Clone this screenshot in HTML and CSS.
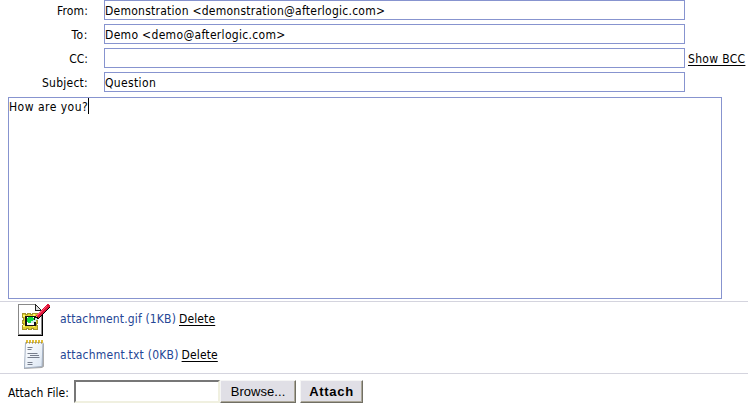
FILE: index.html
```html
<!DOCTYPE html>
<html lang="en">
<head>
<meta charset="utf-8">
<title>New message</title>
<link rel="stylesheet" href="styles.css">
</head>
<body>
<form class="compose">
  <div class="fields">
    <div class="label from">From:</div><div class="field"><span class="t-sender">Demonstration &lt;demonstration@afterlogic.com&gt;</span></div><div></div>
    <div class="label to">To:</div><div class="field"><span class="t-recipient">Demo &lt;demo@afterlogic.com&gt;</span></div><div></div>
    <div class="label">CC:</div><div class="field"></div><a class="link bcc">Show BCC</a>
    <div class="label subject">Subject:</div><div class="field"><span class="t-question">Question</span></div><div></div>
  </div>
  <div class="message"><span class="t-body">How are you?</span><i class="caret"></i></div>
  <div class="attachments">
    <div class="attachment gif">
      <svg class="icon" width="34" height="34" viewBox="0 0 34 34" shape-rendering="crispEdges">
        <path d="M1.500 1.500h17l6 6v24h-23z" fill="#fff" stroke="#888"/>
        <path d="M1 32h24V8" fill="none" stroke="#000"/>
        <path d="M18.500 1.500v6h6z" fill="#ddd" stroke="#222"/>
        <path d="M5 10h3v1h2v-1h3v1h2v-1h5v4h-1v3h1v3h-1v2h1v4h-4v-1h-2v1h-3v-1H9v1H5v-4h1v-2H5v-3h1v-3H5z" fill="#e0d02c" stroke="#a3952a"/>
        <path d="M6 12h2v2H6zM16 11h2v2h-2zM6 22h2v2H6zM16 22h2v2h-2z" fill="#fff76b"/>
        <path d="M8 13h11v10H8z" fill="#111"/>
        <path d="M10 14h7v8h-7z" fill="#fff"/>
        <path d="M11 14h5v1h1v4h-1v1h-5v-1h-1v-4h1z" fill="#12d943"/>
        <path d="M14 18h2v-1h2v-2h3v2h-2v2h-2v1h-3z" fill="#c8eee8"/>
        <path d="M20 15.500L32 3.500" stroke="#000" stroke-width="3"/>
        <path d="M20 14L32 2" stroke="#e0163a" stroke-width="3"/>
        <path d="M20 12.500L30 3" stroke="#ff5575"/>
      </svg>
      <span class="file t-gif">attachment.gif (1KB)</span><a class="link delete">Delete</a>
    </div>
    <div class="attachment">
      <svg class="icon" width="34" height="34" viewBox="0 0 34 34">
        <defs><linearGradient id="paper" x2="1" y2="1"><stop stop-color="#fff"/><stop offset="1" stop-color="#dbe6f3"/></linearGradient></defs>
        <path d="M9 5.500h18v23L25 30 7 31z" fill="#aaa"/>
        <path d="M8.500 4.500h17.500l-1 24-17.500 1.500z" fill="url(#paper)" stroke="#a6b3c5"/>
        <path d="M9 3.500h17" stroke="#e0bd36" stroke-width="3" stroke-dasharray="2 1"/>
        <path d="M9 5h17" stroke="#8c7430" stroke-dasharray="1 2"/>
        <path d="M10.500 9.500h5M10.500 11.500h4M10.500 15.500h10M13 17.500h9M10.500 19.500h12M10.500 24.500h5M10.500 26.500h5" stroke="#777e8c"/>
      </svg>
      <span class="file t-txt">attachment.txt (0KB)</span><a class="link delete">Delete</a>
    </div>
  </div>
  <div class="upload">
    <span class="upload-label">Attach File:</span>
    <span class="path"></span>
    <span class="button browse">Browse...</span>
    <span class="button attach">Attach</span>
  </div>
</form>
</body>
</html>
```
FILE: styles.css
```css
* { box-sizing: border-box; }
body {
  margin: 0;
  width: 748px;
  height: 408px;
  overflow: hidden;
  background: #fff;
  color: #000;
  font: 12px/18px "DejaVu Sans Condensed", "Noto Sans", sans-serif;
  white-space: nowrap;
}
.fields {
  display: grid;
  grid-template-columns: 88px 597px 63px;
  grid-auto-rows: 20px;
  row-gap: 4px;
}
.label { text-align: right; padding-top: 2px; }
.from { letter-spacing: .15px; }
.to { letter-spacing: .6px; }
.subject { letter-spacing: .25px; }
.field { margin-left: 16px; border: 1px solid #8794cf; padding-top: 1px; }
.field span { display: block; margin-bottom: -1px; }
.t-sender { letter-spacing: .25px; }
.t-recipient { letter-spacing: .32px; }
.t-question { letter-spacing: .35px; }
.t-body { letter-spacing: .48px; }
.bcc { justify-self: start; margin-left: 3px; padding-top: 2px; letter-spacing: .32px; }
.link { color: #000; text-decoration: underline; text-underline-offset: 2px; }
.message {
  display: flex;
  margin: 5px 0 0 8px;
  width: 714px;
  height: 202px;
  border: 1px solid #8794cf;
}
.caret { width: 1px; height: 16px; background: #000; }
.attachments {
  display: grid;
  grid-template-rows: 35px 36px;
  margin-top: 2px;
  height: 73px;
  border-top: 1px solid #d4d4de;
  border-bottom: 1px solid #d4d4de;
}
.attachment { display: flex; align-items: center; padding-left: 17px; }
.gif .file, .gif .delete { margin-top: -1px; }
.icon { flex: none; margin-right: 9px; }
.file { color: #254695; margin-right: 3px; }
.t-gif { letter-spacing: .15px; }
.t-txt { letter-spacing: .22px; }
.delete { letter-spacing: .12px; }
.upload { display: flex; align-items: flex-start; padding: 6px 0 0 8px; }
.upload-label { width: 66px; padding-top: 4px; letter-spacing: .08px; }
.path {
  width: 146px;
  height: 23px;
  border: 2px solid;
  border-color: #777 #f0f0e0 #f0f0e0 #777;
}
.button {
  height: 23px;
  background: #e0dfe6;
  border: 1px solid;
  border-color: #f5f5f5 #716f64 #716f64 #f5f5f5;
  box-shadow: inset -1px -1px #aca899;
  text-align: center;
  padding-top: 2px;
  font-family: "Liberation Sans", sans-serif;
  font-size: 13px;
}
.browse { width: 76px; letter-spacing: .05px; }
.attach { width: 63px; margin-left: 4px; font-weight: bold; letter-spacing: .7px; }
```
